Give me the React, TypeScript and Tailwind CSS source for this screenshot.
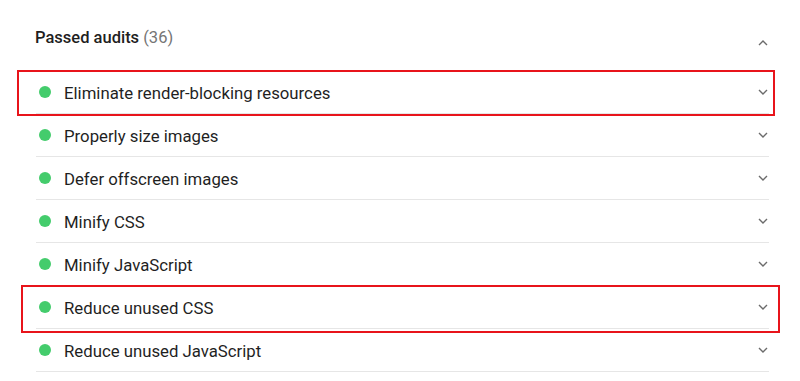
import React from "react";

const audits = [
  "Eliminate render-blocking resources",
  "Properly size images",
  "Defer offscreen images",
  "Minify CSS",
  "Minify JavaScript",
  "Reduce unused CSS",
  "Reduce unused JavaScript",
];

function Chevron({ up = false }: { up?: boolean }) {
  return (
    <svg width="10" height="6" viewBox="0 0 10 6" className={up ? "rotate-180" : ""} aria-hidden="true">
      <path d="M1 1l4 4 4-4" fill="none" stroke="#6b6b6b" strokeWidth="1.4" />
    </svg>
  );
}

export default function App() {
  return (
    <div
      className="h-[381px] w-[800px] overflow-hidden bg-white text-[#1f1f1f]"
      style={{ fontFamily: "Roboto, 'Liberation Sans', sans-serif" }}
    >
      <div className="ml-[36px] w-[733px]">
        {/* section header */}
        <div className="flex h-[71px] items-start justify-between">
          <p className="ml-[-1px] mt-[28px] text-[16.5px] font-medium leading-5">
            Passed audits <span className="font-normal text-[#757575]">(36)</span>
          </p>
          <span className="mr-[1px] mt-[40px]">
            <Chevron up />
          </span>
        </div>

        {/* audit list */}
        <div className="relative">
          {audits.map((a) => (
            <div key={a} className="flex h-[43px] items-center border-b border-[#e6e6e6]">
              <span className="ml-[3px] h-[12px] w-[12px] rounded-full bg-[#44cc6c]" />
              <span className="ml-[13px] flex-1 pt-[1px] text-[16.75px] leading-5">{a}</span>
              <span className="mr-[1px]">
                <Chevron />
              </span>
            </div>
          ))}

          {/* annotation boxes */}
          <div className="pointer-events-none absolute left-[-19px] top-[-1px] h-[46px] w-[758px] border-2 border-[#e8141b]" />
          <div className="pointer-events-none absolute left-[-15px] top-[214px] h-[48px] w-[759px] border-2 border-[#e8141b]" />
        </div>
      </div>
    </div>
  );
}
